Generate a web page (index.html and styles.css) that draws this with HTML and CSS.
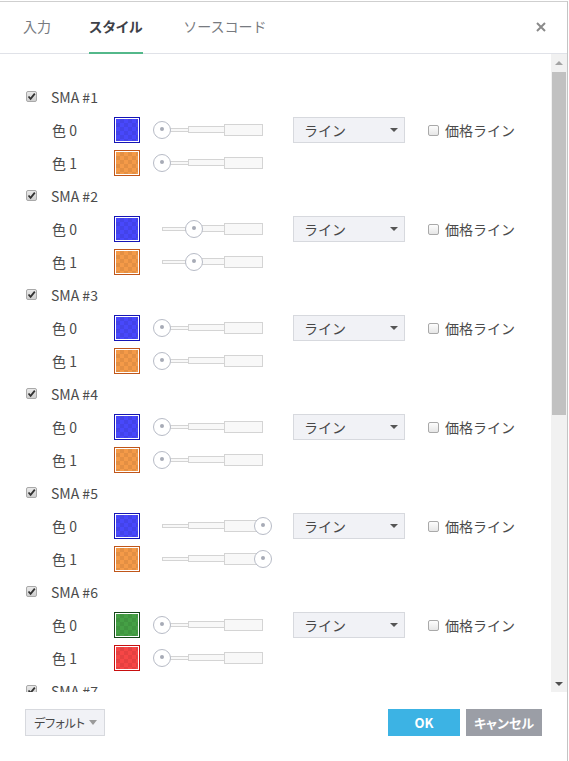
FILE: index.html
```html
<!DOCTYPE html>
<html>
<head>
    <title>スタイル</title>
    <link rel="stylesheet" href="styles.css">
</head>
<body>
    <div class="dialog">
        <div class="header">
            <div class="tab">入力</div>
            <div class="tab active">スタイル</div>
            <div class="tab">ソースコード</div>
            <svg class="close" width="10" height="10" viewBox="0 0 10 10"><path d="M1 1L9 9M9 1L1 9" stroke="#8a8a8a" stroke-width="2"/></svg>
        </div>

        <div class="body">
            <div class="content">
                <!-- SMA #1 -->
                <div class="group-head"><span class="check on"></span><span class="name">SMA #1</span></div>
                <div class="color-row">
                    <span class="label">色 0</span>
                    <span class="swatch blue"><i></i></span>
                    <div class="slider"><div class="track"><span class="seg s1"></span><span class="seg s2"></span><span class="seg s3"></span></div><span class="thumb" style="left: 0%"></span></div>
                    <div class="select">ライン<span class="caret"></span></div>
                    <span class="price"><span class="check"></span>価格ライン</span>
                </div>
                <div class="color-row">
                    <span class="label">色 1</span>
                    <span class="swatch orange"><i></i></span>
                    <div class="slider"><div class="track"><span class="seg s1"></span><span class="seg s2"></span><span class="seg s3"></span></div><span class="thumb" style="left: 0%"></span></div>
                </div>

                <!-- SMA #2 -->
                <div class="group-head"><span class="check on"></span><span class="name">SMA #2</span></div>
                <div class="color-row">
                    <span class="label">色 0</span>
                    <span class="swatch blue"><i></i></span>
                    <div class="slider"><div class="track"><span class="seg s1"></span><span class="seg s2"></span><span class="seg s3"></span></div><span class="thumb" style="left: 32%"></span></div>
                    <div class="select">ライン<span class="caret"></span></div>
                    <span class="price"><span class="check"></span>価格ライン</span>
                </div>
                <div class="color-row">
                    <span class="label">色 1</span>
                    <span class="swatch orange"><i></i></span>
                    <div class="slider"><div class="track"><span class="seg s1"></span><span class="seg s2"></span><span class="seg s3"></span></div><span class="thumb" style="left: 32%"></span></div>
                </div>

                <!-- SMA #3 -->
                <div class="group-head"><span class="check on"></span><span class="name">SMA #3</span></div>
                <div class="color-row">
                    <span class="label">色 0</span>
                    <span class="swatch blue"><i></i></span>
                    <div class="slider"><div class="track"><span class="seg s1"></span><span class="seg s2"></span><span class="seg s3"></span></div><span class="thumb" style="left: 0%"></span></div>
                    <div class="select">ライン<span class="caret"></span></div>
                    <span class="price"><span class="check"></span>価格ライン</span>
                </div>
                <div class="color-row">
                    <span class="label">色 1</span>
                    <span class="swatch orange"><i></i></span>
                    <div class="slider"><div class="track"><span class="seg s1"></span><span class="seg s2"></span><span class="seg s3"></span></div><span class="thumb" style="left: 0%"></span></div>
                </div>

                <!-- SMA #4 -->
                <div class="group-head"><span class="check on"></span><span class="name">SMA #4</span></div>
                <div class="color-row">
                    <span class="label">色 0</span>
                    <span class="swatch blue"><i></i></span>
                    <div class="slider"><div class="track"><span class="seg s1"></span><span class="seg s2"></span><span class="seg s3"></span></div><span class="thumb" style="left: 0%"></span></div>
                    <div class="select">ライン<span class="caret"></span></div>
                    <span class="price"><span class="check"></span>価格ライン</span>
                </div>
                <div class="color-row">
                    <span class="label">色 1</span>
                    <span class="swatch orange"><i></i></span>
                    <div class="slider"><div class="track"><span class="seg s1"></span><span class="seg s2"></span><span class="seg s3"></span></div><span class="thumb" style="left: 0%"></span></div>
                </div>

                <!-- SMA #5 -->
                <div class="group-head"><span class="check on"></span><span class="name">SMA #5</span></div>
                <div class="color-row">
                    <span class="label">色 0</span>
                    <span class="swatch blue"><i></i></span>
                    <div class="slider"><div class="track"><span class="seg s1"></span><span class="seg s2"></span><span class="seg s3"></span></div><span class="thumb" style="left: 100%"></span></div>
                    <div class="select">ライン<span class="caret"></span></div>
                    <span class="price"><span class="check"></span>価格ライン</span>
                </div>
                <div class="color-row">
                    <span class="label">色 1</span>
                    <span class="swatch orange"><i></i></span>
                    <div class="slider"><div class="track"><span class="seg s1"></span><span class="seg s2"></span><span class="seg s3"></span></div><span class="thumb" style="left: 100%"></span></div>
                </div>

                <!-- SMA #6 -->
                <div class="group-head"><span class="check on"></span><span class="name">SMA #6</span></div>
                <div class="color-row">
                    <span class="label">色 0</span>
                    <span class="swatch green"><i></i></span>
                    <div class="slider"><div class="track"><span class="seg s1"></span><span class="seg s2"></span><span class="seg s3"></span></div><span class="thumb" style="left: 0%"></span></div>
                    <div class="select">ライン<span class="caret"></span></div>
                    <span class="price"><span class="check"></span>価格ライン</span>
                </div>
                <div class="color-row">
                    <span class="label">色 1</span>
                    <span class="swatch red"><i></i></span>
                    <div class="slider"><div class="track"><span class="seg s1"></span><span class="seg s2"></span><span class="seg s3"></span></div><span class="thumb" style="left: 0%"></span></div>
                </div>

                <!-- SMA #7 -->
                <div class="group-head"><span class="check on"></span><span class="name">SMA #7</span></div>
            </div>
            <div class="scrollbar">
                <span class="arrow up"></span>
                <span class="bar"></span>
                <span class="arrow down"></span>
            </div>
        </div>

        <div class="footer">
            <div class="select default">デフォルト<span class="caret light"></span></div>
            <div class="actions">
                <button class="btn ok">OK</button>
                <button class="btn cancel">キャンセル</button>
            </div>
        </div>
    </div>
</body>
</html>
```

FILE: styles.css
```css
body {
    margin: 0;
    padding-top: 1px;
    background: #fff;
    font-family: "Noto Sans CJK JP", sans-serif;
    font-size: 14px;
    color: #4b4b4b;
    overflow: hidden;
}

.dialog {
    width: 567px;
    height: 760px;
    border-top: 1px solid #cfcfcf;
    border-right: 1px solid #c4c4c4;
    background: #fff;
}

/* cabecera con pestañas */
.header {
    position: relative;
    display: flex;
    align-items: center;
    height: 51px;
    padding-left: 23px;
    border-bottom: 1px solid #e0e2e8;
}

.tab {
    position: relative;
    height: 51px;
    line-height: 49px;
    margin-right: 38px;
    font-size: 14px;
    color: #777a80;
}

.tab.active {
    font-weight: bold;
    color: #3e4148;
    font-feature-settings: "palt";
    letter-spacing: 0.5px;
    margin-right: 40px;
}

.tab.active::after {
    content: '';
    position: absolute;
    left: 0;
    right: 0;
    bottom: -1px;
    height: 2px;
    background: #53b88a;
}

.close {
    position: absolute;
    right: 21px;
    top: 20px;
}

/* cuerpo con scroll */
.body {
    display: flex;
    height: 638px;
    overflow: hidden;
}

.content {
    flex: 1;
    padding-top: 26px;
}

.group-head {
    display: flex;
    align-items: center;
    height: 33px;
    padding-left: 26px;
}

.group-head .name {
    margin-left: 14px;
}

.check {
    display: inline-block;
    width: 11px;
    height: 11px;
    box-sizing: border-box;
    border: 1px solid #a9a9a9;
    border-radius: 2px;
    background: linear-gradient(#fdfdfd, #e6e6e6);
}

.check.on {
    background-color: #dcdcdc;
    background-image: url("data:image/svg+xml;utf8,<svg xmlns='http://www.w3.org/2000/svg' width='9' height='9' viewBox='0 0 9 9'><path d='M1.5 4.5L3.6 6.8L7.8 1.6' fill='none' stroke='%23333' stroke-width='1.8'/></svg>"), linear-gradient(#e9e9e9, #cfcfcf);
    background-repeat: no-repeat;
    background-position: center;
}

.color-row {
    display: flex;
    align-items: center;
    height: 33px;
    padding-left: 52px;
}

.label {
    width: 62px;
}

.swatch {
    width: 26px;
    height: 26px;
    box-sizing: border-box;
    border: 1px solid;
    padding: 1px;
    background: #fff;
}

.swatch i {
    display: block;
    width: 100%;
    height: 100%;
    background-image: repeating-conic-gradient(rgba(0, 0, 0, 0.07) 0 25%, transparent 0 50%);
    background-size: 8px 8px;
}

.swatch.blue { border-color: #1515b5; }
.swatch.blue i { background-color: #4848fb; }
.swatch.orange { border-color: #c0561a; }
.swatch.orange i { background-color: #f49a48; }
.swatch.green { border-color: #16461a; }
.swatch.green i { background-color: #45a045; }
.swatch.red { border-color: #c80e0e; }
.swatch.red i { background-color: #f64646; }

/* grosor de línea */
.slider {
    position: relative;
    width: 101px;
    height: 26px;
    margin-left: 22px;
    display: flex;
    align-items: center;
}

.track {
    display: flex;
    align-items: center;
}

.seg {
    box-sizing: border-box;
    border: 1px solid #d4d4d4;
    background: #f8f8f8;
}

.seg + .seg {
    margin-left: -1px;
}

.s1 { width: 27px; height: 4px; }
.s2 { width: 37px; height: 7px; }
.s3 { width: 39px; height: 12px; }

.thumb {
    position: absolute;
    top: 50%;
    width: 18px;
    height: 18px;
    box-sizing: border-box;
    border: 1.5px solid #b7bbc6;
    border-radius: 50%;
    background: #fff;
    transform: translate(-50%, -50%);
}

.thumb::after {
    content: '';
    position: absolute;
    left: 5.5px;
    top: 5.5px;
    width: 4px;
    height: 4px;
    border-radius: 50%;
    background: #a7abb6;
}

.select {
    position: relative;
    width: 112px;
    height: 26px;
    box-sizing: border-box;
    margin-left: 30px;
    padding-left: 10px;
    line-height: 24px;
    border: 1px solid #d7d9de;
    background: #f1f2f6;
    color: #474747;
}

.caret {
    position: absolute;
    right: 6px;
    top: 10px;
    border-left: 4px solid transparent;
    border-right: 4px solid transparent;
    border-top: 4px solid #555;
}

.caret.light {
    border-top-color: #9a9a9a;
    border-left-width: 4px;
    border-right-width: 4px;
    border-top-width: 5px;
    top: 10px;
    right: 7px;
}

.price {
    display: flex;
    align-items: center;
    margin-left: 23px;
}

.price .check {
    margin-right: 6px;
    margin-top: 1px;
}

/* barra de scroll */
.scrollbar {
    width: 16px;
    display: flex;
    flex-direction: column;
    align-items: center;
    background: #f1f1f1;
}

.arrow {
    border-left: 4px solid transparent;
    border-right: 4px solid transparent;
}

.arrow.up {
    margin-top: 7px;
    border-bottom: 4px solid #a3a3a3;
}

.arrow.down {
    margin-top: auto;
    margin-bottom: 6px;
    border-top: 4px solid #505050;
}

.bar {
    width: 14px;
    height: 343px;
    margin-top: 7px;
    background: #c1c1c1;
}

/* pie */
.footer {
    display: flex;
    justify-content: space-between;
    padding: 17px 25px 0 25px;
}

.select.default {
    width: 80px;
    height: 27px;
    margin-left: 0;
    padding-left: 8px;
    line-height: 25px;
    font-size: 12px;
    font-feature-settings: "palt";
}

.actions {
    display: flex;
    gap: 6px;
}

.btn {
    height: 27px;
    border: none;
    color: #fff;
    font-family: "Noto Sans CJK JP", sans-serif;
    font-size: 13px;
    font-weight: bold;
}

.btn.ok {
    width: 72px;
    background: #3cb3e4;
}

.btn.cancel {
    width: 76px;
    background: #9b9ea6;
    font-feature-settings: "palt";
}
```
